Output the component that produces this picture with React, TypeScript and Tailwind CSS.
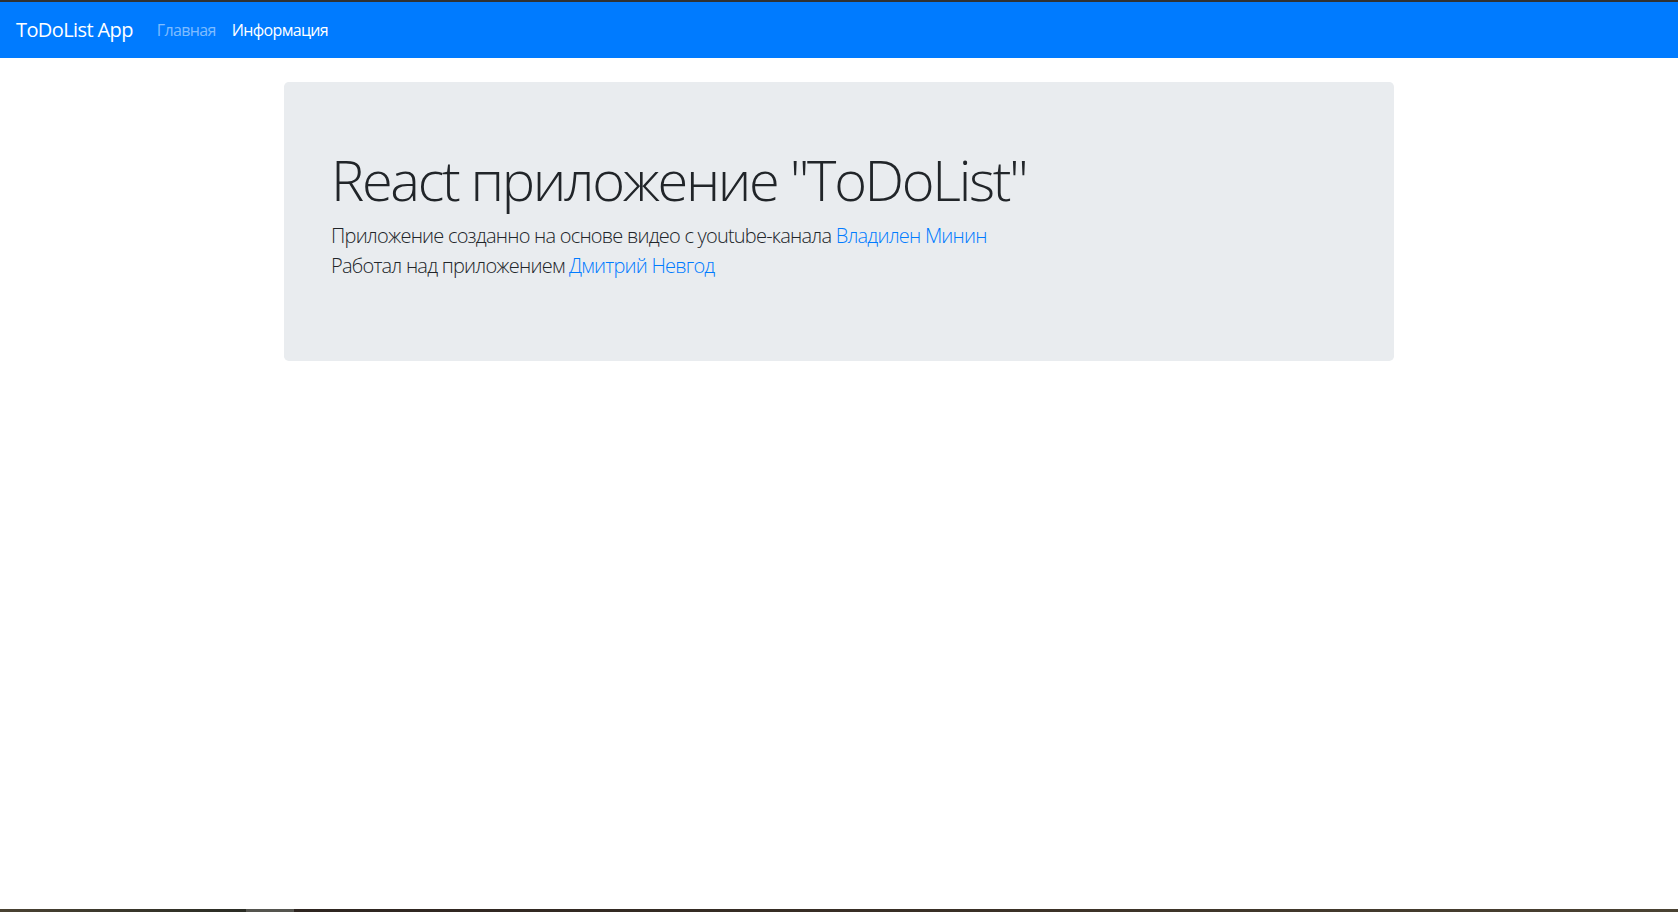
import React from "react";

export default function App() {
  return (
    <div
      className="h-[912px] overflow-hidden flex flex-col bg-white text-[#212529]"
      style={{ fontFamily: '"Open Sans", "Noto Sans", Arial, sans-serif' }}
    >
      <div className="h-[2px] bg-[#2f3133]" />
      <nav className="h-[56px] bg-[#007bff] px-4 flex items-center">
        <a className="text-[20px] leading-[30px] tracking-[-0.6px] text-white mr-4 whitespace-nowrap">ToDoList App</a>
        <ul className="flex items-center text-[16px] leading-[24px] tracking-[-0.65px]">
          <li>
            <a className="px-2 text-white/50">Главная</a>
          </li>
          <li>
            <a className="px-2 text-white">Информация</a>
          </li>
        </ul>
      </nav>
      <main className="flex-1">
        <div className="mx-auto w-[1140px] px-[15px] pt-6">
          <div className="bg-[#e9ecef] rounded-[4.8px] py-16 px-8 mb-8">
            <div className="px-[15px]">
              <h1 className="text-[56px] font-light leading-[1.2] tracking-[-2.35px] mb-2 whitespace-nowrap">
                React приложение "ToDoList"
              </h1>
              <p className="text-[20px] font-light leading-[1.5] tracking-[-0.78px] mb-4">
                Приложение созданно на основе видео с youtube-канала{" "}
                <a className="text-[#007bff]">Владилен Минин</a>
                <br />
                Работал над приложением <a className="text-[#007bff]">Дмитрий Невгод</a>
              </p>
            </div>
          </div>
        </div>
      </main>
      <div className="h-[3px] flex">
        <div className="w-[246px] bg-gradient-to-r from-[#4a4232] to-[#2a2c24]" />
        <div className="w-[48px] bg-[#55554f]" />
        <div className="flex-1 bg-gradient-to-r from-[#2e2520] via-[#3a3026] to-[#4a4232]" />
      </div>
    </div>
  );
}
